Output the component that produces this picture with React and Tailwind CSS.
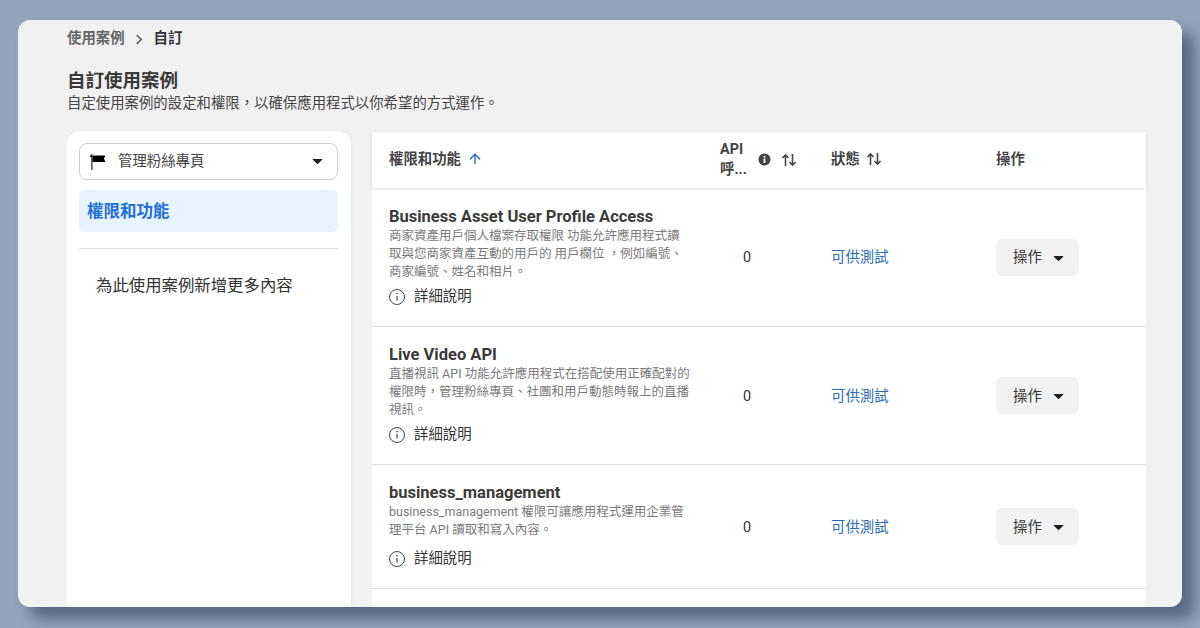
import { ArrowUp } from 'lucide-react';

const FONT = { fontFamily: 'Roboto, "Noto Sans CJK TC", sans-serif' };

const Caret = ({ className = '' }) => (
  <svg viewBox="0 0 12 8" className={`h-[7px] w-[11px] fill-[#1c1e21] ${className}`}>
    <path d="M1.2 1h9.6c.6 0 .9.7.5 1.1L6.6 6.7c-.3.3-.9.3-1.2 0L.7 2.1C.3 1.7.6 1 1.2 1z" />
  </svg>
);

const SortIcon = () => (
  <svg viewBox="0 0 16 14" className="h-[14px] w-4 fill-none stroke-[#444]" strokeWidth="1.6">
    <path d="M4.5 13V2M1.5 5l3-3.2 3 3.2M11.5 1v11M8.5 9l3 3.2 3-3.2" />
  </svg>
);

const InfoOutline = () => (
  <svg viewBox="0 0 16 16" className="h-4 w-4 shrink-0 fill-none stroke-[#444]" strokeWidth="1">
    <circle cx="8" cy="8" r="7.5" />
    <path d="M8 7v4.5" strokeWidth="1.2" />
    <circle cx="8" cy="4.6" r=".8" fill="#444" stroke="none" />
  </svg>
);

const InfoSolid = () => (
  <svg viewBox="0 0 14 14" className="h-[13px] w-[13px]">
    <circle cx="7" cy="7" r="6.5" fill="#444" />
    <rect x="6" y="6" width="2" height="4.6" fill="#fff" />
    <circle cx="7" cy="4" r="1.1" fill="#fff" />
  </svg>
);

const FlagIcon = () => (
  <svg viewBox="0 0 16 16" className="h-4 w-4 fill-black">
    <rect x="1.4" y="0" width="1" height="16" />
    <path d="M0 1.5h2v1.5H0zM2.4 1.5h13l-1.4 3 1.4 3.5h-13z" />
  </svg>
);

const rows = [
  {
    title: 'Business Asset User Profile Access',
    lines: ['商家資產用戶個人檔案存取權限 功能允許應用程式讀', '取與您商家資產互動的用戶的 用戶欄位 ，例如編號、', '商家編號、姓名和相片。'],
    height: 'h-[139px]',
    linkGap: 'mt-[6px]',
  },
  {
    title: 'Live Video API',
    lines: ['直播視訊 API 功能允許應用程式在搭配使用正確配對的', '權限時，管理粉絲專頁、社團和用戶動態時報上的直播', '視訊。'],
    height: 'h-[138px]',
    linkGap: 'mt-[6px]',
  },
  {
    title: 'business_management',
    lines: ['business_management 權限可讓應用程式運用企業管', '理平台 API 讀取和寫入內容。'],
    height: 'h-[124px]',
    linkGap: 'mt-[10px]',
  },
];

const Row = ({ row }) => (
  <div className={`flex items-center border-b border-[#dadde1] ${row.height}`}>
    <div className="w-[331px] pl-[17px]">
      <div className="text-[16.5px] leading-[18px] font-bold text-[#3a3a3a]">{row.title}</div>
      <div className="mt-px text-[12.5px] leading-[18px] text-[#7a7a7a]">
        {row.lines.map((line) => (
          <div key={line} className="whitespace-nowrap">{line}</div>
        ))}
      </div>
      <div className={`${row.linkGap} flex items-center gap-[9px] text-[14.4px] leading-5 text-[#333]`}>
        <InfoOutline />
        詳細說明
      </div>
    </div>
    <div className="mt-0.5 w-[128px] pl-10 text-[14.4px] text-[#333]">0</div>
    <div className="mt-0.5 w-[165px] text-[14.4px] text-[#2a6cb5]">可供測試</div>
    <button className="flex h-[37px] w-[83px] items-center justify-center gap-[11px] rounded-md bg-[#f2f2f2] pt-0.5 pl-0.5 text-[14.4px] text-[#333]">
      操作
      <Caret className="w-2.5" />
    </button>
  </div>
);

export default function App() {
  return (
    <div style={FONT} className="h-[628px] w-[1200px] overflow-hidden bg-[#93a3bb] pt-5 pl-[18px]">
      <div className="flex h-[587px] w-[1164px] flex-col overflow-hidden rounded-xl bg-[#f1f1f1] pl-[49px] shadow-[12px_12px_14px_rgba(70,85,105,0.75)]">
        {/* Breadcrumb */}
        <div className="mt-2.5 flex items-center text-[14.4px] leading-[18px] font-bold">
          <span className="text-[#666]">使用案例</span>
          <svg viewBox="0 0 8 12" className="mx-[10px] mr-[11px] h-[11px] w-2 fill-none stroke-[#555]" strokeWidth="1.6">
            <path d="M1.5 1l5 5-5 5" />
          </svg>
          <span className="text-[#333]">自訂</span>
        </div>

        <h1 className="mt-[21px] text-[18.5px] leading-6 font-bold text-[#3a3a3a]">自訂使用案例</h1>
        <p className="mt-0.5 text-[14.4px] leading-[18px] text-[#444]">自定使用案例的設定和權限，以確保應用程式以你希望的方式運作。</p>

        <div className="mt-[18px] flex flex-1 gap-[21px] overflow-hidden">
          {/* Sidebar */}
          <aside className="w-[284px] rounded-t-xl bg-white pt-3 pr-[13px] pl-3 shadow-[0_0_3px_rgba(0,0,0,0.1)]">
            <div className="flex h-[37px] items-center rounded-lg border border-[#ccd0d5] pr-[14px] pl-[10px] text-[14.4px] text-[#444]">
              <FlagIcon />
              <span className="ml-3 flex-1">管理粉絲專頁</span>
              <Caret />
            </div>
            <div className="mt-[10px] flex h-[42px] items-center rounded-md bg-[#e7f3ff] pt-0.5 pl-2 text-[16.5px] font-bold text-[#1f6fd6]">權限和功能</div>
            <div className="mt-4 border-t border-[#dadde1]" />
            <div className="mt-[27px] pl-[17px] text-[16.4px] leading-[20px] text-[#333]">為此使用案例新增更多內容</div>
          </aside>

          {/* Table */}
          <section className="mt-px w-[774px] bg-white">
            <div className="flex h-14 items-center pb-px text-[14.4px] font-bold text-[#444] shadow-[0_1px_3px_rgba(0,0,0,0.12)]">
              <div className="flex w-[331px] items-center pl-[17px]">
                權限和功能
                <ArrowUp size={16} strokeWidth={2} className="ml-[6px] text-[#1f6fb5]" />
              </div>
              <div className="flex w-[128px] items-center pl-[17px]">
                <div className="w-[38px] leading-[20px]">API<br />呼...</div>
                <InfoSolid />
                <span className="ml-[10px]"><SortIcon /></span>
              </div>
              <div className="flex w-[165px] items-center gap-1.5">
                狀態
                <SortIcon />
              </div>
              <div>操作</div>
            </div>
            {rows.map((row) => (
              <Row key={row.title} row={row} />
            ))}
          </section>
        </div>
      </div>
    </div>
  );
}
